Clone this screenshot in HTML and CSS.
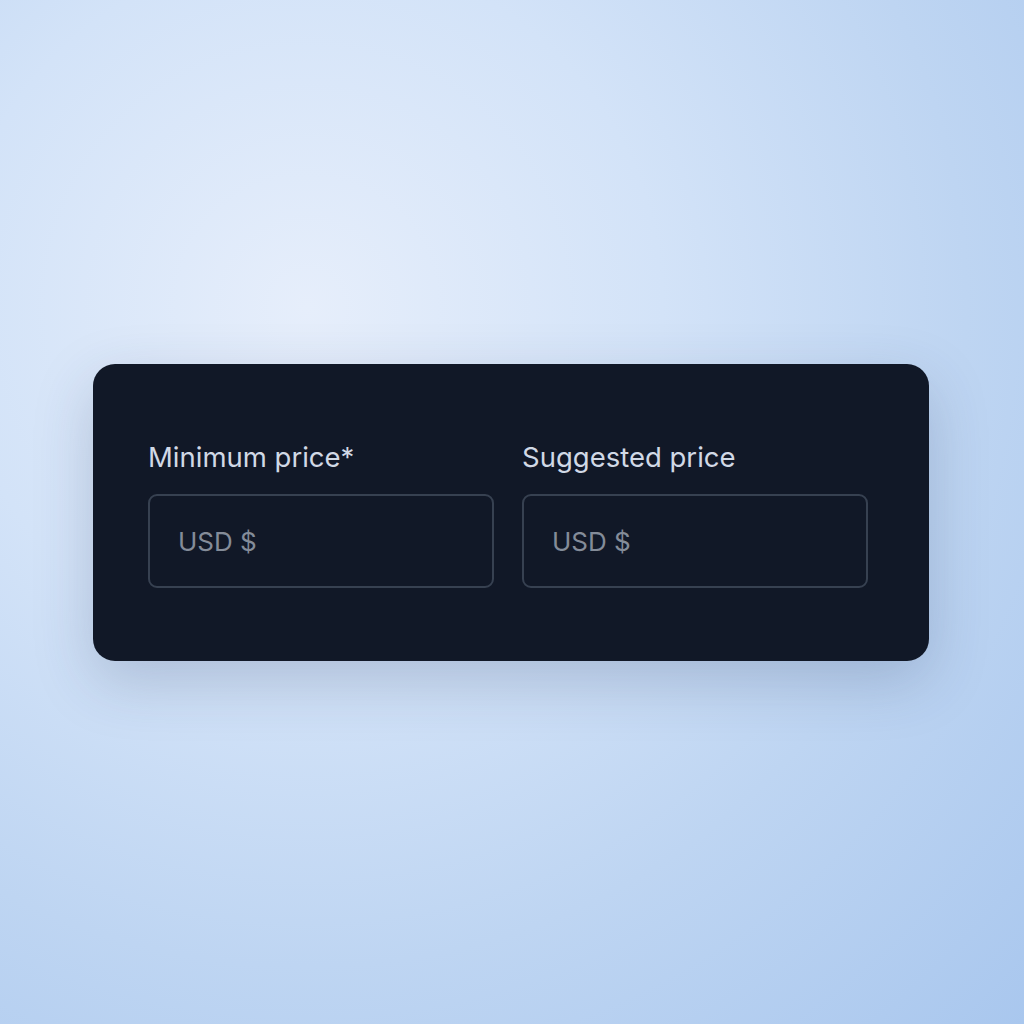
FILE: index.html
```html
<!DOCTYPE html>
<html lang="en">
<head>
<meta charset="utf-8">
<title>Price</title>
<link rel="stylesheet" href="styles.css">
</head>
<body>
<main class="stage">
  <section class="card">
    <div class="field">
      <label class="label" for="min">Minimum price*</label>
      <input class="input" id="min" type="text" placeholder="USD $">
    </div>
    <div class="field">
      <label class="label" for="sug">Suggested price</label>
      <input class="input" id="sug" type="text" placeholder="USD $">
    </div>
  </section>
</main>
</body>
</html>
```

FILE: styles.css
```css
* { box-sizing: border-box; }
html, body { margin: 0; height: 100%; }
body {
  font-family: Inter, "Noto Sans", sans-serif;
  background: radial-gradient(circle at 30% 30%, #e6eefb 0%, #d3e3f8 35%, #bed5f2 65%, #a9c7ee 100%);
}
.stage {
  height: 100%;
  display: flex;
  align-items: center;
  justify-content: center;
}
.card {
  width: 836px;
  height: 297px;
  margin-left: -2px;
  background: #111827;
  border-radius: 22px;
  padding: 77px 61px 0 55px;
  display: grid;
  grid-template-columns: minmax(0, 1fr) minmax(0, 1fr);
  column-gap: 28px;
  align-content: start;
  box-shadow: 0 20px 60px rgba(40, 60, 100, 0.22);
}
.field { display: flex; flex-direction: column; min-width: 0; }
.label {
  font-size: 27.5px;
  font-weight: 400;
  line-height: 33px;
  color: #d1d9e6;
  margin-bottom: 20px;
}
.input {
  width: 100%;
  min-width: 0;
  height: 94px;
  background: #111827;
  border: 2px solid #374151;
  border-radius: 9px;
  padding: 2px 0 0 28px;
  font-family: Inter, "Noto Sans", sans-serif;
  font-size: 26px;
  color: #e5e7eb;
  outline: none;
}
.input::placeholder { color: #848c99; }
```
